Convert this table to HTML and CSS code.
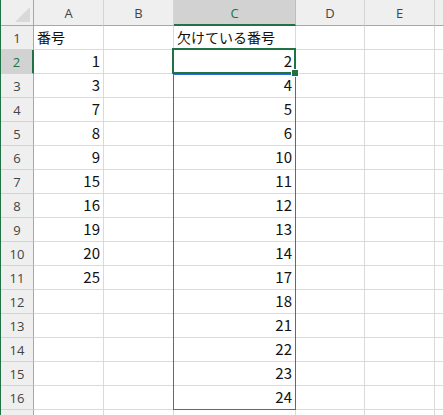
FILE: index.html
```html
<!DOCTYPE html>
<html lang="ja">
<head>
<meta charset="utf-8">
<link rel="stylesheet" href="styles.css">
</head>
<body>
<div class="sheet">
  <div class="row head">
    <div class="corner"><span class="tri"></span></div>
    <div class="ch">A</div><div class="ch">B</div><div class="ch sel">C</div><div class="ch">D</div><div class="ch">E</div><div class="ch last"></div>
  </div>
  <div class="row"><div class="rh">1</div><div class="c t">番号</div><div class="c"></div><div class="c t">欠けている番号</div><div class="c"></div><div class="c"></div><div class="c"></div></div>
  <div class="row"><div class="rh sel">2</div><div class="c">1</div><div class="c"></div><div class="c active">2</div><div class="c"></div><div class="c"></div><div class="c"></div></div>
  <div class="row"><div class="rh">3</div><div class="c">3</div><div class="c"></div><div class="c">4</div><div class="c"></div><div class="c"></div><div class="c"></div></div>
  <div class="row"><div class="rh">4</div><div class="c">7</div><div class="c"></div><div class="c">5</div><div class="c"></div><div class="c"></div><div class="c"></div></div>
  <div class="row"><div class="rh">5</div><div class="c">8</div><div class="c"></div><div class="c">6</div><div class="c"></div><div class="c"></div><div class="c"></div></div>
  <div class="row"><div class="rh">6</div><div class="c">9</div><div class="c"></div><div class="c">10</div><div class="c"></div><div class="c"></div><div class="c"></div></div>
  <div class="row"><div class="rh">7</div><div class="c">15</div><div class="c"></div><div class="c">11</div><div class="c"></div><div class="c"></div><div class="c"></div></div>
  <div class="row"><div class="rh">8</div><div class="c">16</div><div class="c"></div><div class="c">12</div><div class="c"></div><div class="c"></div><div class="c"></div></div>
  <div class="row"><div class="rh">9</div><div class="c">19</div><div class="c"></div><div class="c">13</div><div class="c"></div><div class="c"></div><div class="c"></div></div>
  <div class="row"><div class="rh">10</div><div class="c">20</div><div class="c"></div><div class="c">14</div><div class="c"></div><div class="c"></div><div class="c"></div></div>
  <div class="row"><div class="rh">11</div><div class="c">25</div><div class="c"></div><div class="c">17</div><div class="c"></div><div class="c"></div><div class="c"></div></div>
  <div class="row"><div class="rh">12</div><div class="c"></div><div class="c"></div><div class="c">18</div><div class="c"></div><div class="c"></div><div class="c"></div></div>
  <div class="row"><div class="rh">13</div><div class="c"></div><div class="c"></div><div class="c">21</div><div class="c"></div><div class="c"></div><div class="c"></div></div>
  <div class="row"><div class="rh">14</div><div class="c"></div><div class="c"></div><div class="c">22</div><div class="c"></div><div class="c"></div><div class="c"></div></div>
  <div class="row"><div class="rh">15</div><div class="c"></div><div class="c"></div><div class="c">23</div><div class="c"></div><div class="c"></div><div class="c"></div></div>
  <div class="row"><div class="rh">16</div><div class="c"></div><div class="c"></div><div class="c">24</div><div class="c"></div><div class="c"></div><div class="c"></div></div>
  <div class="row"><div class="rh"></div><div class="c"></div><div class="c"></div><div class="c"></div><div class="c"></div><div class="c"></div><div class="c"></div></div>
  <div class="range"></div>
</div>
</body>
</html>
```
FILE: styles.css
```css
html, body {
  margin: 0;
  padding: 0;
  background: #fff;
  overflow: hidden;
}
.sheet {
  position: relative;
  width: 444px;
  height: 415px;
  overflow: hidden;
  border-left: 1px solid #217346;
  box-sizing: border-box;
  font-family: "Noto Sans CJK JP", "Noto Sans", sans-serif;
}
.row {
  display: grid;
  grid-template-columns: 33px 70px 70px 122px 69px 70px 1fr;
  height: 24px;
}
.row.head {
  height: 26px;
  background: #efefef;
}
.corner, .ch, .rh, .c {
  box-sizing: border-box;
  min-width: 0;
  overflow: hidden;
}
.corner {
  position: relative;
  background: #efefef;
  border-right: 1px solid #a8a8a8;
  border-bottom: 1px solid #a8a8a8;
}
.tri {
  position: absolute;
  right: 3px;
  bottom: 3px;
  width: 0;
  height: 0;
  border-left: 15px solid transparent;
  border-bottom: 15px solid #d9d9d9;
}
.ch {
  display: flex;
  align-items: center;
  justify-content: center;
  font-family: "Open Sans", "Noto Sans", sans-serif;
  font-size: 13px;
  color: #444;
  border-right: 1px solid #d4d4d4;
  border-bottom: 1px solid #a8a8a8;
  padding-top: 1px;
}
.ch.sel {
  background: #d2d2d2;
  color: #217346;
  border-bottom: 2px solid #217346;
  border-right-color: #bdbdbd;
}
.rh {
  display: flex;
  align-items: center;
  justify-content: center;
  background: #efefef;
  font-family: "Open Sans", "Noto Sans", sans-serif;
  font-size: 13px;
  color: #444;
  border-right: 1px solid #a8a8a8;
  border-bottom: 1px solid #d4d4d4;
}
.rh.sel {
  background: #d2d2d2;
  color: #217346;
  border-right: 2px solid #217346;
}
.c {
  display: flex;
  align-items: flex-end;
  justify-content: flex-end;
  padding: 0 3px 3px 3px;
  font-size: 15px;
  line-height: 18px;
  color: #111;
  border-right: 1px solid #dadada;
  border-bottom: 1px solid #dadada;
  white-space: nowrap;
}
.c.t {
  justify-content: flex-start;
  overflow: visible;
  font-size: 14px;
}
.c.active {
  position: relative;
  overflow: visible;
  z-index: 5;
}
.c.active::after {
  content: "";
  position: absolute;
  left: -2px;
  top: -2px;
  right: -1px;
  bottom: -1px;
  border: 2px solid #217346;
  pointer-events: none;
}
.c.active::before {
  content: "";
  position: absolute;
  right: -4px;
  bottom: -4px;
  width: 6px;
  height: 6px;
  background: #217346;
  border: 1px solid #fff;
  z-index: 2;
}
.range {
  position: absolute;
  left: 172px;
  top: 74px;
  width: 123px;
  height: 336px;
  border: 1px solid #2f6fdb;
  box-sizing: border-box;
  pointer-events: none;
  z-index: 1;
}
```
